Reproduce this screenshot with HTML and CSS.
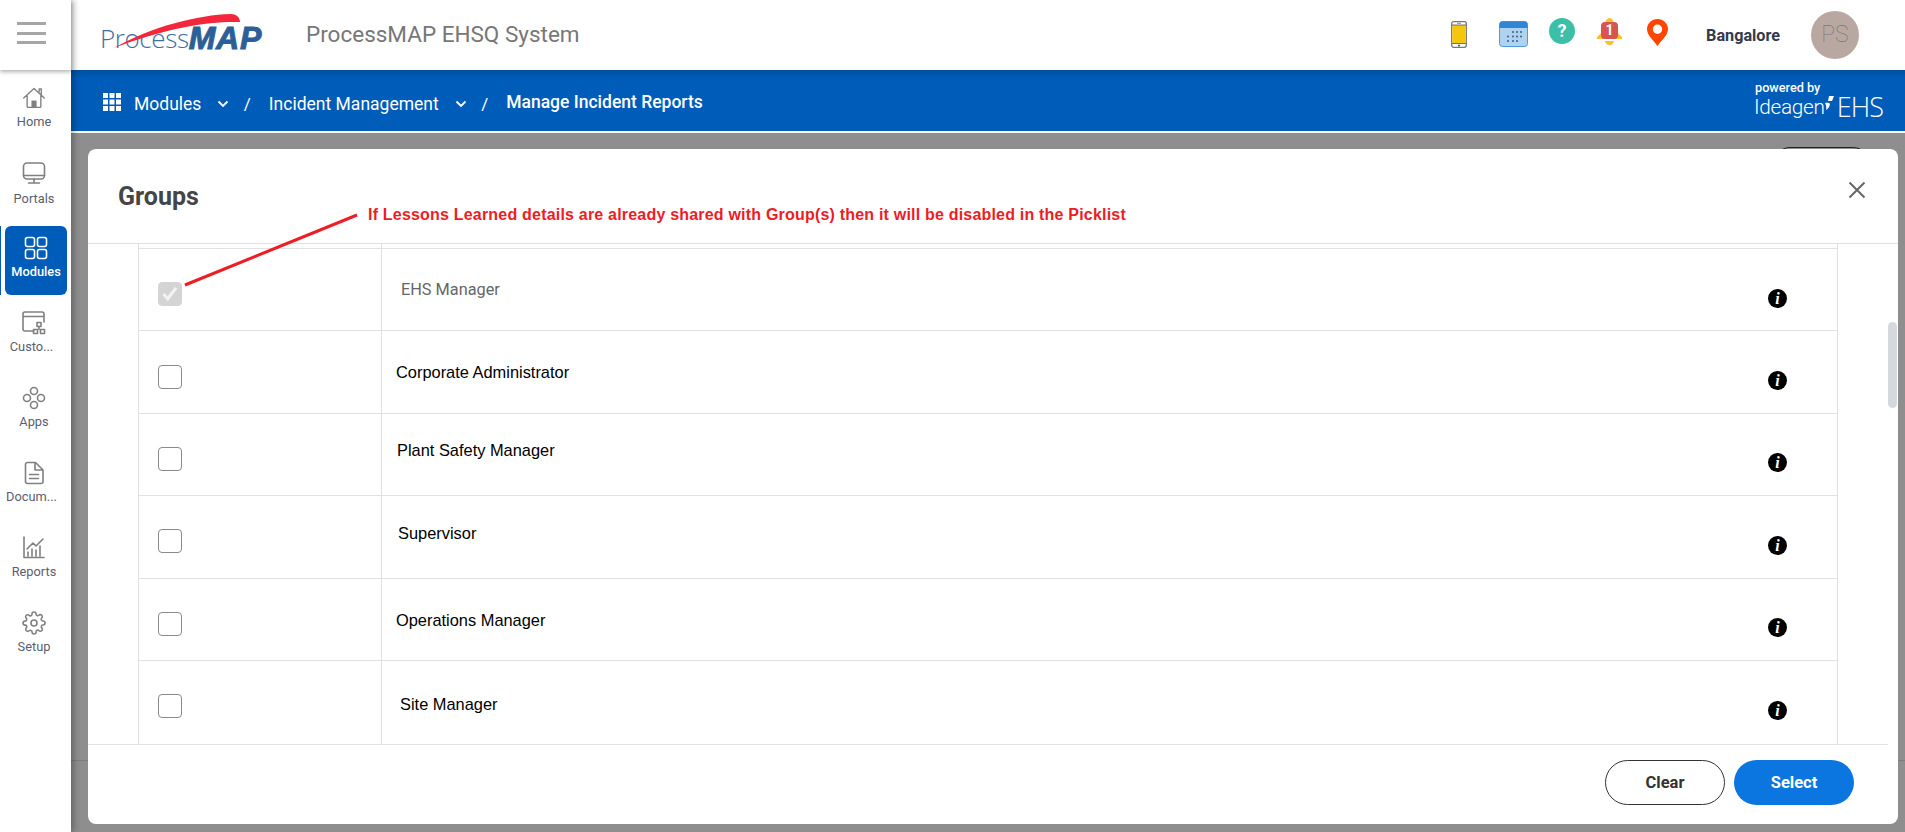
FILE: index.html
```html
<!DOCTYPE html>
<html lang="en">
<head>
<meta charset="utf-8">
<title>ProcessMAP EHSQ System</title>
<link rel="stylesheet" href="styles.css">
</head>
<body>
<div class="app">
  <aside class="sidebar">
    <div class="burger"><span></span><span></span><span></span></div>
    <nav class="nav">
      <a class="nav-item">
        <svg class="nav-icon" viewBox="0 0 28 28"><path d="M2 14 14 3l12 11M6 11.500V24a1 1 0 0 0 1 1h14a1 1 0 0 0 1-1V11.500M20 7V3.500h2.500V9.500"/><path class="solid" d="M11 25v-8h6v8z"/></svg>
        <span class="nav-label">Home</span>
      </a>
      <a class="nav-item nav-low">
        <svg class="nav-icon" viewBox="0 0 24 24"><rect x="1.500" y="2" width="21" height="16" rx="3.500"/><path d="M1.500 14.500h21M12 18v4M6.500 22h11"/></svg>
        <span class="nav-label">Portals</span>
      </a>
      <a class="nav-item nav-active">
        <svg class="nav-icon" viewBox="0 0 24 24"><rect x="1.500" y="1.500" width="9" height="9" rx="2"/><rect x="13.500" y="1.500" width="9" height="9" rx="2"/><rect x="1.500" y="13.500" width="9" height="9" rx="2"/><rect x="13.500" y="13.500" width="9" height="9" rx="2"/></svg>
        <span class="nav-label">Modules</span>
      </a>
      <a class="nav-item nav-trunc">
        <svg class="nav-icon" viewBox="0 0 24 24"><path d="M12 20H3a2 2 0 0 1-2-2V3a2 2 0 0 1 2-2h17a2 2 0 0 1 2 2v8M1 5.500h21"/><rect x="15" y="11.500" width="4" height="4"/><rect x="11.500" y="18.500" width="4" height="4"/><rect x="18.500" y="18.500" width="4" height="4"/><path d="M17 15.500v3"/></svg>
        <span class="nav-label">Custo...</span>
      </a>
      <a class="nav-item">
        <svg class="nav-icon" viewBox="0 0 24 24"><circle cx="12" cy="5" r="3.500"/><circle cx="5" cy="12" r="3.500"/><circle cx="19" cy="12" r="3.500"/><circle cx="12" cy="19" r="3.500"/></svg>
        <span class="nav-label">Apps</span>
      </a>
      <a class="nav-item nav-trunc">
        <svg class="nav-icon" viewBox="0 0 24 24"><path d="M5.500 1.500h8L21 9v11.500a2 2 0 0 1-2 2H5.500a2 2 0 0 1-2-2v-17a2 2 0 0 1 2-2zM13 1.500V9h8M7.500 13.500h9M7.500 17.500h9"/></svg>
        <span class="nav-label">Docum...</span>
      </a>
      <a class="nav-item">
        <svg class="nav-icon" viewBox="0 0 24 24"><path d="M2 1v20.500h20M5 13l6-6 3 3 7-7M6 20v-4M10 20v-7M14 20v-6M18 20V10"/></svg>
        <span class="nav-label">Reports</span>
      </a>
      <a class="nav-item">
        <svg class="nav-icon" viewBox="0 0 24 24"><circle cx="12" cy="12" r="3"/><path d="M19.400 15a1.650 1.650 0 0 0 .33 1.820l.06.06a2 2 0 0 1 0 2.830 2 2 0 0 1-2.830 0l-.06-.06a1.650 1.650 0 0 0-1.820-.33 1.650 1.650 0 0 0-1 1.510V21a2 2 0 0 1-2 2 2 2 0 0 1-2-2v-.09A1.650 1.650 0 0 0 9 19.400a1.650 1.650 0 0 0-1.820.33l-.06.06a2 2 0 0 1-2.830 0 2 2 0 0 1 0-2.830l.06-.06a1.650 1.650 0 0 0 .33-1.820 1.650 1.650 0 0 0-1.510-1H3a2 2 0 0 1-2-2 2 2 0 0 1 2-2h.09A1.650 1.650 0 0 0 4.600 9a1.650 1.650 0 0 0-.33-1.820l-.06-.06a2 2 0 0 1 0-2.830 2 2 0 0 1 2.830 0l.06.06a1.650 1.650 0 0 0 1.820.33H9a1.650 1.650 0 0 0 1-1.510V3a2 2 0 0 1 2-2 2 2 0 0 1 2 2v.09a1.650 1.650 0 0 0 1 1.510 1.650 1.650 0 0 0 1.820-.33l.06-.06a2 2 0 0 1 2.830 0 2 2 0 0 1 0 2.830l-.06.06a1.650 1.650 0 0 0-.33 1.820V9a1.650 1.650 0 0 0 1.510 1H21a2 2 0 0 1 2 2 2 2 0 0 1-2 2h-.09a1.650 1.650 0 0 0-1.510 1z"/></svg>
        <span class="nav-label">Setup</span>
      </a>
    </nav>
  </aside>

  <div class="main">
    <header class="topbar">
      <div class="logo">
        <span class="logo-process">Process</span><span class="logo-map">MAP</span>
        <svg class="logo-swoosh" viewBox="0 0 130 36"><path d="M1 34C40 12 85 1 118 0c5 0 9 3 9 8-28-1-72 5-126 26z"/></svg>
      </div>
      <div class="app-title">ProcessMAP EHSQ System</div>
      <div class="top-actions">
        <svg class="ti ti-phone" viewBox="0 0 16 27"><rect x=".7" y=".7" width="14.600" height="25.600" rx="2" fill="#fff" stroke="#777" stroke-width="1.300"/><rect x="1.300" y="4" width="13.400" height="18.500" fill="#f5c60e"/><path d="M1 4h14M1 22.500h14" stroke="#555" stroke-width=".8"/><path d="M6 2.300h4" stroke="#888"/><circle cx="8" cy="24.400" r="1" fill="#444"/></svg>
        <svg class="ti ti-cal" viewBox="0 0 29 26"><rect x=".5" y=".5" width="28" height="25" rx="3" fill="#aed2f0" stroke="#4f9ade"/><path d="M.5 7V3.500a3 3 0 0 1 3-3h22a3 3 0 0 1 3 3V7z" fill="#2f86d6"/><g fill="#3a5f86"><circle cx="14" cy="11" r="1"/><circle cx="18" cy="11" r="1"/><circle cx="22" cy="11" r="1"/><circle cx="9" cy="15.500" r="1"/><circle cx="14" cy="15.500" r="1"/><circle cx="18" cy="15.500" r="1"/><circle cx="22" cy="15.500" r="1"/><circle cx="9" cy="20" r="1"/><circle cx="14" cy="20" r="1"/><circle cx="18" cy="20" r="1"/></g></svg>
        <span class="ti-help">?</span>
        <span class="ti-bell">
          <svg class="bell-shape" viewBox="0 0 25 27"><path d="M12.500 0c2 0 4 2 4.500 5 1 6 3 10 8 14v2H0v-2c5-4 7-8 8-14 .5-3 2.500-5 4.500-5z" fill="#fbc02d"/><path d="M8 23h9c-.5 2.500-2 4-4.500 4S8.500 25.500 8 23z" fill="#fbc02d"/></svg>
          <span class="bell-count">1</span>
        </span>
        <svg class="ti ti-pin" viewBox="0 0 21 27"><path fill-rule="evenodd" d="M10.500 27C6 21 0 16 0 10.300 0 4.500 4.700 0 10.500 0S21 4.500 21 10.300C21 16 15 21 10.500 27zm0-21.500a4.700 4.700 0 1 0 0 9.400 4.700 4.700 0 0 0 0-9.400z" fill="#ff4500"/></svg>
        <span class="location">Bangalore</span>
        <span class="avatar">PS</span>
      </div>
    </header>

    <div class="crumbbar">
      <svg class="crumb-grid" viewBox="0 0 18 18"><g fill="#fff"><rect width="5" height="5"/><rect x="6.500" width="5" height="5"/><rect x="13" width="5" height="5"/><rect y="6.500" width="5" height="5"/><rect x="6.500" y="6.500" width="5" height="5"/><rect x="13" y="6.500" width="5" height="5"/><rect y="13" width="5" height="5"/><rect x="6.500" y="13" width="5" height="5"/><rect x="13" y="13" width="5" height="5"/></g></svg>
      <span class="crumb crumb-first">Modules</span>
      <svg class="chev" viewBox="0 0 12 8"><path d="M1.500 1.500 6 6l4.500-4.500"/></svg>
      <span class="slash">/</span>
      <span class="crumb">Incident Management</span>
      <svg class="chev" viewBox="0 0 12 8"><path d="M1.500 1.500 6 6l4.500-4.500"/></svg>
      <span class="slash">/</span>
      <span class="crumb crumb-current">Manage Incident Reports</span>
      <div class="brand">
        <span class="brand-powered">powered by</span>
        <span class="brand-line"><span class="brand-ideagen">Ideagen</span><svg class="brand-mark" viewBox="0 0 9 14"><path d="M4 0h5L7 5H3zM0 7c3-.5 4.500 0 5 1-.5 3-2 5-4 6 .5-2 .5-4-1-7z" fill="#fff"/></svg><span class="brand-ehs">EHS</span></span>
      </div>
    </div>

    <div class="stage">
      <span class="behind-pill"></span>
      <span class="behind-line"></span>
      <section class="modal">
        <div class="modal-head">
          <h2 class="modal-title">Groups</h2>
          <svg class="modal-close" viewBox="0 0 18 18"><path d="M1.500 1.500l15 15M16.500 1.500l-15 15"/></svg>
        </div>
        <div class="modal-body">
          <div class="grid-wrap">
            <div class="row row-top"><div class="c-check"></div><div class="c-name"></div></div>
            <div class="row">
              <div class="c-check"><span class="cb cb-disabled"><svg viewBox="0 0 24 24"><path d="M5 12.500l5 5.500L19.500 5.500"/></svg></span></div>
              <div class="c-name n1">EHS Manager</div>
              <div class="c-info"><span class="info">i</span></div>
            </div>
            <div class="row">
              <div class="c-check"><span class="cb"></span></div>
              <div class="c-name n2">Corporate Administrator</div>
              <div class="c-info"><span class="info">i</span></div>
            </div>
            <div class="row">
              <div class="c-check"><span class="cb"></span></div>
              <div class="c-name n3">Plant Safety Manager</div>
              <div class="c-info"><span class="info">i</span></div>
            </div>
            <div class="row">
              <div class="c-check"><span class="cb"></span></div>
              <div class="c-name n4">Supervisor</div>
              <div class="c-info"><span class="info">i</span></div>
            </div>
            <div class="row">
              <div class="c-check"><span class="cb"></span></div>
              <div class="c-name n5">Operations Manager</div>
              <div class="c-info"><span class="info">i</span></div>
            </div>
            <div class="row row-last">
              <div class="c-check"><span class="cb"></span></div>
              <div class="c-name n6">Site Manager</div>
              <div class="c-info"><span class="info">i</span></div>
            </div>
          </div>
        </div>
        <span class="scroll-thumb"></span>
        <div class="modal-foot">
          <button class="btn btn-clear">Clear</button>
          <button class="btn btn-select">Select</button>
        </div>
        <div class="note">If Lessons Learned details are already shared with Group(s) then it will be disabled in the Picklist</div>
        <svg class="note-arrow" viewBox="0 0 176 74"><path d="M2 72 174 2"/></svg>
      </section>
    </div>
  </div>
</div>
</body>
</html>
```
FILE: styles.css
```css
* { box-sizing: border-box; }
html, body { margin: 0; height: 832px; overflow: hidden; }
body { font-family: Roboto, "Liberation Sans", sans-serif; background: #fff; }

.app { display: flex; width: 1905px; height: 832px; }

/* sidebar */
.sidebar { width: 71px; flex: none; background: #fff; position: relative; z-index: 3; box-shadow: 3px 0 6px rgba(0,0,0,.28); }
.burger { height: 70px; display: flex; flex-direction: column; justify-content: center; gap: 6.500px; padding: 0 25px 4px 17px; box-shadow: 0 2px 4px rgba(0,0,0,.3); background: #fff; }
.burger span { display: block; height: 3px; background: #a6a6a6; }
.nav { display: flex; flex-direction: column; gap: 6px; padding-top: 6px; }
.nav-item { height: 69px; margin: 0 6px 0 3px; border-radius: 6px; display: flex; flex-direction: column; align-items: center; padding-top: 10px; color: #5a5e70; position: relative; }
.nav-icon { width: 24px; height: 24px; fill: none; stroke: #808080; stroke-width: 1.600; stroke-linecap: round; stroke-linejoin: round; }
.nav-icon .solid { fill: #808080; stroke: none; }
.nav-label { font-size: 12.800px; line-height: 14px; margin-top: 5px; white-space: nowrap; }
.nav-low .nav-label { margin-top: 7px; }
.nav-trunc .nav-label { margin-left: -5px; }
.nav-active { margin: 0 4px 0 5px; background: #005cb9; color: #fff; }
.nav-active::before { content: ""; position: absolute; left: -5px; top: 0; bottom: 0; width: 1px; background: #005cb9; }
.nav-active .nav-icon { stroke: #fff; }
.nav-active .nav-label { font-weight: 500; }

/* main column */
.main { flex: 1; display: flex; flex-direction: column; min-width: 0; }
.topbar { height: 70px; flex: none; display: flex; align-items: center; background: #fff; padding-left: 29px; }
.logo { position: relative; width: 162px; height: 36px; display: flex; align-items: flex-end; line-height: 28px; padding-bottom: 1px; }
.logo-process { font-family: "Open Sans", sans-serif; font-weight: 300; font-size: 26px; letter-spacing: -.4px; color: #3d6fa6; }
.logo-map { font-family: "Liberation Sans", sans-serif; font-weight: 700; font-style: italic; font-size: 32px; letter-spacing: .8px; color: #2c5f97; -webkit-text-stroke: 1px #2c5f97; }
.logo-swoosh { position: absolute; left: 13px; top: -3px; width: 130px; height: 36px; fill: #f4263b; }
.app-title { margin-left: 44px; margin-top: -3px; font-size: 22.500px; font-weight: 400; color: #777; white-space: nowrap; }
.top-actions { margin-left: auto; display: flex; align-items: center; height: 100%; position: relative; padding-right: 46px; }
.ti { display: block; flex: none; }
.ti-phone { width: 16px; height: 27px; margin-top: -2px; }
.ti-cal { width: 29px; height: 26px; margin-left: 32px; margin-top: -2px; }
.ti-help { width: 26px; height: 26px; margin-left: 21px; margin-top: -8px; border-radius: 50%; background: #3bbfa6; color: #fff; font-weight: 700; font-size: 18px; line-height: 26px; text-align: center; }
.ti-bell { position: relative; width: 25px; height: 27px; margin-left: 22px; margin-top: -7px; }
.bell-shape { display: block; width: 25px; height: 27px; }
.bell-count { position: absolute; left: 4px; top: 4px; width: 17px; height: 17px; border-radius: 4px; background: #d9534f; color: #fff; font-weight: 700; font-size: 14px; line-height: 17px; text-align: center; }
.ti-pin { width: 21px; height: 27px; margin-left: 25px; margin-top: -6px; }
.location { margin-left: 38px; font-size: 16.200px; font-weight: 700; color: #333a4d; white-space: nowrap; margin-top: 1px; }
.avatar { width: 48px; height: 48px; margin-left: 31px; border-radius: 50%; background: #b9a8a1; color: #777; font-size: 23px; font-weight: 100; line-height: 48px; text-align: center; }

/* breadcrumb bar */
.crumbbar { height: 61px; flex: none; display: flex; align-items: center; padding: 6px 22px 0 32px; color: #fff; background: linear-gradient(#00509f, #005cb9 14%); }
.crumb-grid { width: 18px; height: 18px; flex: none; margin-top: -3px; }
.crumb { font-size: 17.500px; white-space: nowrap; }
.crumb-first { margin-left: 13px; }
.chev { width: 12px; height: 8px; margin-left: 16px; fill: none; stroke: #fff; stroke-width: 1.800; }
.slash { font-size: 17px; margin: 0 18px 0 14.500px; }
.crumb-current { font-weight: 500; margin-left: 0; margin-top: -3px; }
.brand { margin-left: auto; display: flex; flex-direction: column; margin-top: -7px; }
.brand-powered { font-size: 12.700px; line-height: 14px; font-weight: 500; padding-left: 2px; }
.brand-line { display: flex; align-items: flex-end; line-height: 22px; height: 24px; }
.brand-ideagen { font-size: 20.800px; font-weight: 300; letter-spacing: -.3px; line-height: 24px; padding-left: 1px; }
.brand-mark { width: 9px; height: 14px; margin: 0 3px 9px 0; }
.brand-ehs { font-family: "Open Sans", sans-serif; font-size: 27px; font-weight: 300; line-height: 24px; letter-spacing: -.9px; }

/* stage behind the modal */
.stage { flex: 1; position: relative; margin-top: 2px; background: #8e8e8e; }
.behind-pill { position: absolute; left: 1702px; top: 14px; width: 97px; height: 34px; border: 1px solid #222; border-radius: 17px; }
.behind-line { position: absolute; left: 0; right: 0; top: 627px; height: 1px; background: #7d7d7d; }

/* modal */
.modal { position: absolute; left: 17px; top: 16px; width: 1810px; height: 675px; background: #fff; border-radius: 8px; display: flex; flex-direction: column; overflow: hidden; }
.modal-head { height: 95px; flex: none; display: flex; align-items: center; justify-content: space-between; padding: 0 32px 0 30px; border-bottom: 1px solid #dfe1e6; }
.modal-title { margin: 1px 0 0; font-size: 25px; font-weight: 700; color: #454545; }
.modal-close { width: 18px; height: 18px; margin-top: -12px; fill: none; stroke: #666; stroke-width: 2; }
.modal-body { flex: 1; margin-right: 10px; overflow: hidden; border-bottom: 1px solid #e2e2e2; }
.grid-wrap { margin-left: 50px; width: 1700px; border-left: 1px solid #dfe1e6; border-right: 1px solid #dfe1e6; }
.row { display: grid; grid-template-columns: 243px 1fr 120px; height: 82.400px; border-bottom: 1px solid #dfe1e6; }
.row-top { height: 5px; }
.row-last { height: 84px; border-bottom: 0; }
.c-check { border-right: 1px solid #dfe1e6; display: flex; align-items: center; padding: 9px 0 0 19px; }
.row-last .c-check { padding-bottom: 2px; }
.c-name { display: flex; align-items: center; font-family: "Liberation Sans", sans-serif; font-size: 16.400px; color: #000; white-space: nowrap; }
.n1 { font-family: Roboto, sans-serif; font-size: 16.300px; color: #666; padding: 0 0 0 19px; }
.n2 { padding: 1px 0 0 14px; }
.n3 { padding: 0 0 8px 15px; }
.n4 { padding: 0 0 6px 16px; }
.n5 { padding: 2px 0 0 14px; }
.n6 { padding: 4px 0 0 18px; }
.c-info { display: flex; align-items: center; justify-content: flex-end; padding: 17px 50px 0 0; }
.row-last .c-info { padding-bottom: 1px; }
.info { width: 19px; height: 19px; border-radius: 50%; background: #000; color: #fff; font-family: "Liberation Serif", serif; font-style: italic; font-weight: 700; font-size: 16px; line-height: 19px; text-align: center; }
.cb { display: block; width: 24px; height: 24px; border: 1.500px solid #8a8a8a; border-radius: 4px; background: #fff; }
.cb-disabled { background: #d4d4d4; border-color: #d4d4d4; }
.cb-disabled svg { display: block; width: 21px; height: 21px; fill: none; stroke: #f2f2f2; stroke-width: 3.500; }
.scroll-thumb { position: absolute; right: 1px; top: 173px; width: 9px; height: 86px; border-radius: 5px; background: #d5d9de; }
.modal-foot { height: 79px; flex: none; display: flex; justify-content: flex-end; gap: 9px; padding: 15px 44px 0 0; }
.btn { width: 120px; height: 45px; border-radius: 23px; font-family: Roboto, sans-serif; font-size: 16.500px; font-weight: 700; }
.btn-clear { background: #fff; border: 1px solid #333; color: #333; }
.btn-select { background: #0b76e0; border: 0; color: #fff; }
.note { position: absolute; left: 280px; top: 57px; font-family: "Liberation Sans", sans-serif; font-size: 16px; font-weight: 700; color: #ee1c25; letter-spacing: .2px; white-space: nowrap; }
.note-arrow { position: absolute; left: 95px; top: 64px; width: 176px; height: 74px; fill: none; stroke: #ee1c25; stroke-width: 3; }
```
